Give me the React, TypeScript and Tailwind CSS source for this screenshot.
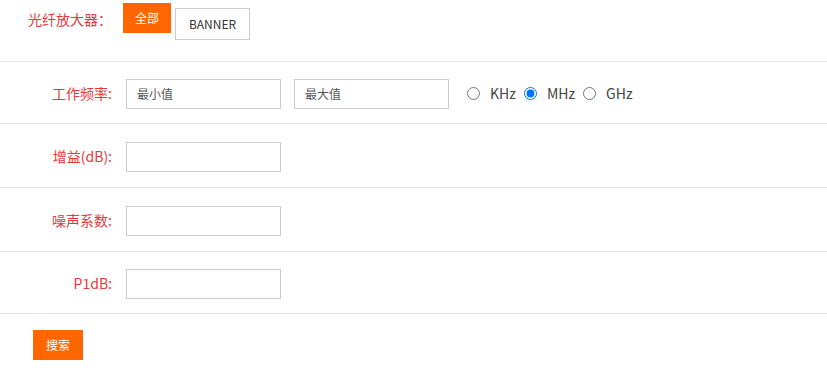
import type { ReactNode } from "react";

const font = { fontFamily: '"Noto Sans CJK SC", "Noto Sans", sans-serif' };

function Row({
	label,
	children,
	className,
}: {
	label: string;
	children: ReactNode;
	className: string;
}) {
	return (
		<div className={`flex items-center border-b border-[#e6e6e6] ${className}`}>
			<label className="w-[112px] shrink-0 text-right text-[14px] text-[#e4393c]">
				{label}
			</label>
			<div className="ml-[14px] flex items-center">{children}</div>
		</div>
	);
}

function TextInput({ placeholder }: { placeholder?: string }) {
	return (
		<input
			type="text"
			placeholder={placeholder}
			className="h-[30px] w-[155px] border border-[#cccccc] bg-white px-[10px] text-[12px] text-[#333] outline-none placeholder:text-[#555]"
		/>
	);
}

function Radio({ label, checked }: { label: string; checked?: boolean }) {
	return (
		<label className="flex items-center text-[14px] text-[#444]">
			<input
				type="radio"
				name="unit"
				defaultChecked={checked}
				className="m-0 mr-[10px] h-[13px] w-[13px]"
			/>
			<span className="mr-[8px]">{label}</span>
		</label>
	);
}

export default function App() {
	return (
		<div className="w-[827px] bg-white" style={font}>
			<div className="flex h-[62px] items-start border-b border-[#e6e6e6]">
				<span className="mt-[9px] w-[112px] shrink-0 text-right text-[14px] text-[#e4393c]">
					光纤放大器：
				</span>
				<button className="ml-[11px] mt-[3px] h-[30px] w-[48px] bg-[#ff6600] text-[12px] text-white">
					全部
				</button>
				<button className="ml-[4px] mt-[8px] h-[32px] w-[75px] border border-[#cccccc] bg-white text-[12px] text-[#333]">
					BANNER
				</button>
			</div>

			<Row label="工作频率:" className="h-[62px] pt-[2px]">
				<TextInput placeholder="最小值" />
				<div className="ml-[13px]">
					<TextInput placeholder="最大值" />
				</div>
				<div className="ml-[18px] flex items-center">
					<Radio label="KHz" />
					<Radio label="MHz" checked />
					<Radio label="GHz" />
				</div>
			</Row>

			<Row label="增益(dB):" className="h-[64px] pt-[2px]">
				<TextInput />
			</Row>

			<Row label="噪声系数:" className="h-[64px] pt-[2px]">
				<TextInput />
			</Row>

			<Row label="P1dB:" className="h-[62px] pt-[2px]">
				<TextInput />
			</Row>

			<div className="pb-[8px] pl-[33px] pt-[16px]">
				<button className="h-[30px] w-[50px] bg-[#ff6600] text-[12px] text-white">
					搜索
				</button>
			</div>
		</div>
	);
}
